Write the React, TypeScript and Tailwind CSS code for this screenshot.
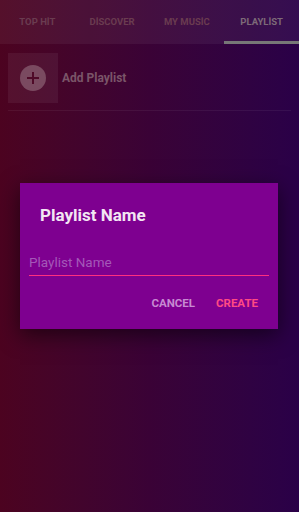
import React from 'react';

const tabs = ['TOP HİT', 'DİSCOVER', 'MY MUSİC', 'PLAYLİST'];

const App: React.FC = () => {
  return (
    <div
      className="relative w-[299px] h-[512px] overflow-hidden bg-gradient-to-r from-[#4c0320] via-[#3a0236] to-[#2a0048]"
      style={{ fontFamily: 'Roboto, "Noto Sans", sans-serif' }}
    >
      {/* tabs */}
      <div className="flex h-[44px] bg-white/[0.05]">
        {tabs.map((tab, i) => (
          <div key={tab} className="relative flex-1 flex items-center justify-center">
            <span
              className={`text-[9.5px] font-bold ${i === 3 ? 'text-[#7d6a78]' : 'text-[#6a3c50]'}`}
            >
              {tab}
            </span>
            {i === 3 && <div className="absolute bottom-0 left-0 right-0 h-[3px] bg-[#777777]" />}
          </div>
        ))}
      </div>

      {/* add playlist row */}
      <div className="px-2 pt-[9px]">
        <div className="flex items-center gap-1">
          <div className="w-[50px] h-[50px] bg-white/[0.06] flex items-center justify-center">
            <div className="w-[26px] h-[26px] rounded-full bg-[#7a4a60] flex items-center justify-center">
              <svg width="14" height="14" viewBox="0 0 14 14">
                <path d="M7 1v12M1 7h12" stroke="#4f0a28" strokeWidth="2" />
              </svg>
            </div>
          </div>
          <span className="text-[12px] font-bold text-[#7a5568]">Add Playlist</span>
        </div>
        <div className="mt-[7px] h-px bg-white/[0.06]" />
      </div>

      {/* dialog */}
      <div className="absolute left-[20px] top-[183px] w-[258px] h-[146px] bg-[#7e0090] shadow-[0_6px_20px_rgba(0,0,0,0.55)] flex flex-col">
        <div className="pl-[20px] pt-[20px] text-[17px] leading-[24px] font-bold text-[#f3e6f3]">Playlist Name</div>
        <div className="mx-[9px] mt-[22px] h-[27px] flex items-center border-b border-[#ff2f80]">
          <span className="text-[13.5px] leading-[20px] text-[#a458b8]">Playlist Name</span>
        </div>
        <div className="flex justify-end gap-[21px] pr-[20px] mt-[19px]">
          <span className="text-[11.5px] leading-[16px] font-bold text-[#c78ad2]">CANCEL</span>
          <span className="text-[11.5px] leading-[16px] font-bold text-[#ff4a84]">CREATE</span>
        </div>
      </div>
    </div>
  );
};

export default App;
